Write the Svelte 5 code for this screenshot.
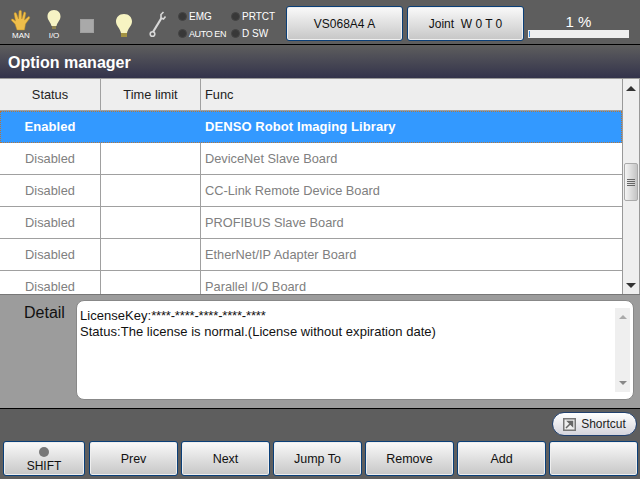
<script lang="ts">
const rows = [
  { status: "Enabled", func: "DENSO Robot Imaging Library", selected: true },
  { status: "Disabled", func: "DeviceNet Slave Board" },
  { status: "Disabled", func: "CC-Link Remote Device Board" },
  { status: "Disabled", func: "PROFIBUS Slave Board" },
  { status: "Disabled", func: "EtherNet/IP Adapter Board" },
  { status: "Disabled", func: "Parallel I/O Board" },
];
const footer = ["Prev", "Next", "Jump To", "Remove", "Add", ""];
const leds = ["EMG", "PRTCT", "AUTO EN", "D SW"];
</script>

<div class="screen">
  <header class="top">
    <div class="icon man">
      <svg width="24" height="22" viewBox="0 0 24 22">
        <path d="M8 21 L6 15 L2.500 11.500 Q1.500 9.500 4 10 L6.500 12 L5 4.500 Q6 2.500 7.500 4.500 L9.500 10 L10 2 Q11.500 .5 12.500 2 L12.800 10 L15 3 Q16.800 2.500 16.800 4.500 L15.500 11 L19.500 7.500 Q21.500 7.500 20.500 9.500 L16.500 15 L15.500 21 Z" fill="#efbe4a" stroke="#b98a25" stroke-width=".5"/>
      </svg>
      <span>MAN</span>
    </div>
    <div class="icon io">
      <svg width="16" height="22" viewBox="0 0 16 22">
        <path d="M8 1 C3.500 1 1.500 4 1.500 7.500 C1.500 11 4.500 13 5.500 17 L10.500 17 C11.500 13 14.500 11 14.500 7.500 C14.500 4 12.500 1 8 1 Z" fill="#f6f3c4"/>
        <rect x="6" y="17" width="4" height="3" fill="#8f8450"/>
      </svg>
      <span>I/O</span>
    </div>
    <div class="stop"></div>
    <svg class="bulb" width="18" height="26" viewBox="0 0 18 26">
      <path d="M9 1 C4 1 1 4.500 1 8.500 C1 13 5 15 6 20 L12 20 C13 15 17 13 17 8.500 C17 4.500 14 1 9 1 Z" fill="#f7f4c2"/>
      <rect x="6" y="20" width="6" height="4" fill="#a39343"/>
    </svg>
    <svg class="wrench" width="20" height="28" viewBox="0 0 20 28">
      <path d="M5 22 L13.500 8" stroke="#d8d8d8" stroke-width="2.200"/>
      <path d="M15.500 2 L13 4.500 L13 8 L15.500 9 L17.500 6.500" fill="none" stroke="#d8d8d8" stroke-width="1.600"/>
      <circle cx="4.500" cy="24" r="2.300" fill="none" stroke="#d8d8d8" stroke-width="1.600"/>
    </svg>
    <div class="leds">
      {#each leds as label}
        <div class="led"><i></i><span class:tight={label === "AUTO EN"}>{label}</span></div>
      {/each}
    </div>
    <button class="btn robot">VS068A4 A</button>
    <button class="btn joint">Joint&nbsp; W 0 T 0</button>
    <div class="speed">
      <span>1 %</span>
      <div class="track"><div class="fill" style="width: 1%"></div></div>
    </div>
  </header>

  <h1>Option manager</h1>

  <div class="list">
    <div class="table">
      <div class="row head">
        <div class="c1">Status</div>
        <div class="c2">Time limit</div>
        <div class="c3">Func</div>
      </div>
      {#each rows as row}
        <div class="row" class:selected={row.selected}>
          <div class="c1">{row.status}</div>
          <div class="c2"></div>
          <div class="c3">{row.func}</div>
        </div>
      {/each}
    </div>
    <div class="scroll">
      <svg width="10" height="5" viewBox="0 0 10 5"><path d="M5 0 L10 5 H0 Z" fill="#333"/></svg>
      <div class="rail">
        <div class="thumb"><b></b><b></b><b></b><b></b></div>
      </div>
      <svg width="10" height="5" viewBox="0 0 10 5"><path d="M5 5 L10 0 H0 Z" fill="#333"/></svg>
    </div>
  </div>

  <section class="detail">
    <div class="detail-label">Detail</div>
    <div class="detail-box">
      <div class="detail-text">
        LicenseKey:<span class="masked">****-****-****-****-****</span><br />
        Status:The license is normal.(License without expiration date)
      </div>
      <div class="mini-scroll">
        <svg width="8" height="4" viewBox="0 0 8 4"><path d="M4 0 L8 4 H0 Z" fill="#aaa"/></svg>
        <svg width="8" height="4" viewBox="0 0 8 4"><path d="M4 4 L8 0 H0 Z" fill="#888"/></svg>
      </div>
    </div>
  </section>

  <footer>
    <div class="shortcut-row">
      <button class="shortcut">
        <svg width="13" height="13" viewBox="0 0 13 13">
          <rect width="13" height="13" fill="#777"/>
          <rect x="1.500" y="1.500" width="10" height="10" fill="#eee"/>
          <path d="M3 10 L8 5 M5 3.500 H9.500 V8 Z" stroke="#666" stroke-width="1.500" fill="#666"/>
        </svg>
        Shortcut
      </button>
    </div>
    <div class="keys">
      <button class="btn shift"><i></i>SHIFT</button>
      {#each footer as label}
        <button class="btn key">{label}</button>
      {/each}
    </div>
  </footer>
</div>

<style>
:global(body) {
  margin: 0;
}

.screen {
  width: 640px;
  height: 479px;
  overflow: hidden;
  display: flex;
  flex-direction: column;
  background: #5e5e5e;
  font-family: "Liberation Sans", Arial, sans-serif;
}

.top {
  height: 44px;
  flex: none;
  display: flex;
  align-items: flex-start;
  border-bottom: 1px solid #000;
  color: #fff;
}

.icon {
  display: flex;
  flex-direction: column;
  align-items: center;
  font-size: 8px;
  line-height: 9px;
  padding-top: 9px;
}

.icon svg {
  display: block;
}

.man {
  width: 24px;
  margin-left: 9px;
}

.io {
  width: 16px;
  margin-left: 13px;
}

.stop {
  width: 14px;
  height: 14px;
  box-sizing: border-box;
  margin: 19px 0 0 18px;
  background: #a9a9a9;
  border: 1px solid #a0a0a0;
}

.bulb {
  margin: 13px 0 0 21px;
}

.wrench {
  margin: 10px 0 0 15px;
}

.leds {
  width: 103px;
  margin: 8px 0 0 10px;
  display: grid;
  grid-template-columns: 53px 50px;
  grid-auto-rows: 17px;
  font-size: 10px;
}

.led {
  display: flex;
  align-items: center;
  gap: 2px;
  white-space: nowrap;
}

.led i {
  width: 9px;
  height: 9px;
  box-sizing: border-box;
  border-radius: 50%;
  background: #383838;
  border: 1px solid #444;
}

.tight {
  font-size: 9px;
  letter-spacing: -0.4px;
}

.btn {
  padding: 0;
  border: 1px solid #0a3f78;
  border-radius: 3px;
  box-shadow: inset 0 0 0 1px #eee;
  background: linear-gradient(#fafafa, #c6c6c6);
  color: #111;
  font: 12px "Liberation Sans", Arial, sans-serif;
}

.robot {
  width: 117px;
  height: 35px;
  margin: 6px 0 0 5px;
}

.joint {
  width: 117px;
  height: 35px;
  margin: 6px 0 0 4px;
}

.speed {
  width: 101px;
  margin: 14px 0 0 4px;
  display: flex;
  flex-direction: column;
  align-items: center;
  font-size: 15px;
  line-height: 15px;
}

.track {
  width: 100%;
  height: 8px;
  margin-top: 1px;
  padding: 1px;
  box-sizing: border-box;
  background: #efefef;
}

.fill {
  height: 100%;
  background: #3d8fe0;
}

h1 {
  margin: 0;
  height: 33px;
  flex: none;
  padding: 1px 0 0 8px;
  box-sizing: border-box;
  font-size: 16px;
  line-height: 34px;
  color: #fff;
  background: linear-gradient(#5e5e5e, #33334b);
}

.list {
  height: 217px;
  flex: none;
  display: flex;
  background: #fff;
  border-top: 1px solid #999;
  box-sizing: border-box;
  border-bottom: 1px solid #777;
  overflow: hidden;
}

.table {
  flex: 1;
  min-width: 0;
}

.row {
  display: flex;
  height: 32px;
  box-sizing: border-box;
  border-bottom: 1px solid #a0a0a0;
  color: #808080;
  font-size: 12.800px;
  line-height: 30px;
}

.row > div {
  box-sizing: border-box;
  height: 100%;
  padding-top: 1px;
}

.c1 {
  width: 101px;
  text-align: center;
  border-right: 1px solid #a0a0a0;
}

.c2 {
  width: 100px;
  text-align: center;
  border-right: 1px solid #a0a0a0;
}

.row > .c3 {
  flex: 1;
  padding-left: 4px;
}

.head {
  background: #eee;
  color: #222;
}

.selected {
  background: #3399ff;
  color: #fff;
  font-size: 13px;
  letter-spacing: 0.08px;
  font-weight: bold;
  outline: 1px dotted #b5763a;
  outline-offset: -1px;
  border-bottom: none;
}

.selected .c1,
.selected .c2 {
  border-right-color: #3399ff;
}

.scroll {
  width: 18px;
  flex: none;
  display: flex;
  flex-direction: column;
  align-items: center;
  padding: 7px 0 6px;
  box-sizing: border-box;
  background: #efefef;
  border-left: 1px solid #999;
  border-right: 1px solid #999;
}

.rail {
  flex: 1;
  align-self: stretch;
  padding-top: 72px;
}

.thumb {
  height: 38px;
  margin: 0 1px;
  box-sizing: border-box;
  border: 1px solid #aaa;
  border-radius: 2px;
  background: linear-gradient(90deg, #f4f4f4, #c4c4c4);
  display: flex;
  flex-direction: column;
  align-items: center;
  justify-content: center;
  gap: 1px;
}

.thumb b {
  width: 8px;
  height: 1px;
  background: #666;
}

.detail {
  height: 113px;
  flex: none;
  display: flex;
  background: #9c9c9c;
  border-bottom: 1px solid #000;
}

.detail-label {
  width: 76px;
  padding: 8px 0 0 24px;
  box-sizing: border-box;
  font-size: 16px;
  line-height: 20px;
  color: #111;
}

.detail-box {
  width: 558px;
  height: 100px;
  margin-top: 5px;
  box-sizing: border-box;
  display: flex;
  justify-content: space-between;
  background: #fff;
  border: 1px solid #888;
  border-radius: 8px;
}

.detail-text {
  padding: 7px 0 0 3px;
  font-size: 13px;
  letter-spacing: 0.03px;
  line-height: 16px;
  color: #111;
}

.masked {
  letter-spacing: -0.17px;
}

.mini-scroll {
  width: 15px;
  margin: 7px 3px 7px 0;
  background: #efefef;
  display: flex;
  flex-direction: column;
  justify-content: space-between;
  align-items: center;
  padding: 7px 0;
  box-sizing: border-box;
}

footer {
  flex: 1;
  display: flex;
  flex-direction: column;
}

.shortcut-row {
  height: 32px;
  display: flex;
  justify-content: flex-end;
  align-items: flex-start;
  padding: 3px 3px 0 0;
  box-sizing: border-box;
}

.shortcut {
  width: 85px;
  height: 24px;
  padding: 0;
  display: flex;
  align-items: center;
  justify-content: center;
  gap: 5px;
  border: 1px solid #21406e;
  border-radius: 12px;
  background: linear-gradient(#fff, #d4d4dc);
  color: #222;
  font: 12px "Liberation Sans", Arial, sans-serif;
}

.keys {
  display: flex;
  gap: 3px;
  padding-left: 3px;
}

.key {
  width: 89px;
  height: 35px;
  font-size: 12.500px;
}

.shift {
  width: 82px;
  height: 35px;
  margin-right: 1px;
  display: flex;
  flex-direction: column;
  align-items: center;
  gap: 2px;
  padding-top: 5px;
}

.shift i {
  width: 10px;
  height: 10px;
  border-radius: 50%;
  background: #777;
}
</style>
